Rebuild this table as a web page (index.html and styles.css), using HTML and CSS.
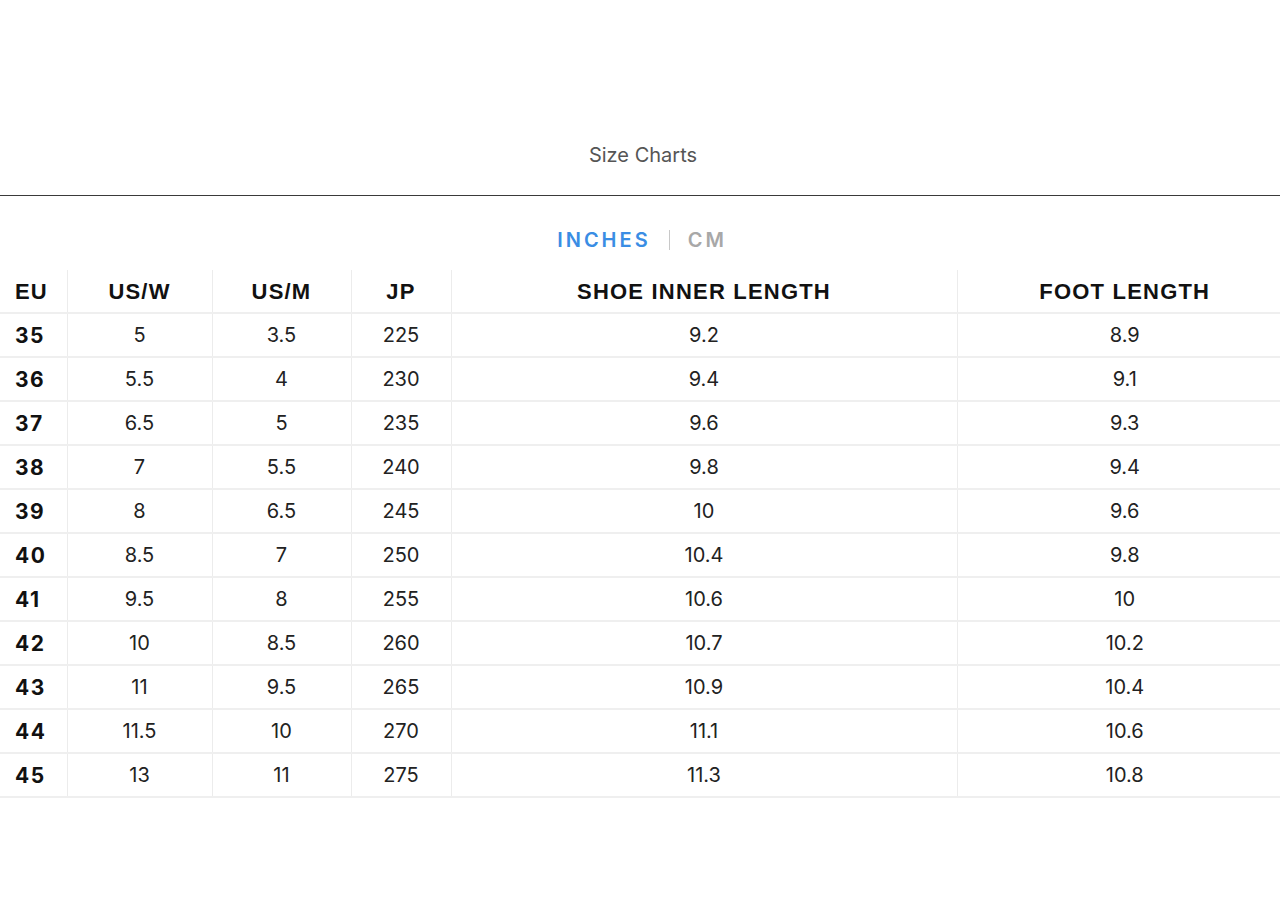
FILE: index.html
```html
<!DOCTYPE html>
<html>
<head>
<meta charset="utf-8">
<link rel="stylesheet" href="styles.css">
</head>
<body>
<div class="page">
  <header class="title-bar">
    <h1 class="title">Size Charts</h1>
  </header>
  <div class="tabs">
    <span class="tab active">INCHES</span>
    <span class="tab-sep"></span>
    <span class="tab">CM</span>
  </div>
  <table class="chart">
    <colgroup>
      <col class="c-eu"><col class="c-usw"><col class="c-usm"><col class="c-jp"><col class="c-shoe"><col class="c-foot">
    </colgroup>
    <thead>
      <tr><th class="eu">EU</th><th>US/W</th><th>US/M</th><th>JP</th><th>SHOE INNER LENGTH</th><th>FOOT LENGTH</th></tr>
    </thead>
    <tbody>
      <tr><td class="eu">35</td><td>5</td><td>3.5</td><td>225</td><td>9.2</td><td>8.9</td></tr>
      <tr><td class="eu">36</td><td>5.5</td><td>4</td><td>230</td><td>9.4</td><td>9.1</td></tr>
      <tr><td class="eu">37</td><td>6.5</td><td>5</td><td>235</td><td>9.6</td><td>9.3</td></tr>
      <tr><td class="eu">38</td><td>7</td><td>5.5</td><td>240</td><td>9.8</td><td>9.4</td></tr>
      <tr><td class="eu">39</td><td>8</td><td>6.5</td><td>245</td><td>10</td><td>9.6</td></tr>
      <tr><td class="eu">40</td><td>8.5</td><td>7</td><td>250</td><td>10.4</td><td>9.8</td></tr>
      <tr><td class="eu">41</td><td>9.5</td><td>8</td><td>255</td><td>10.6</td><td>10</td></tr>
      <tr><td class="eu">42</td><td>10</td><td>8.5</td><td>260</td><td>10.7</td><td>10.2</td></tr>
      <tr><td class="eu">43</td><td>11</td><td>9.5</td><td>265</td><td>10.9</td><td>10.4</td></tr>
      <tr><td class="eu">44</td><td>11.5</td><td>10</td><td>270</td><td>11.1</td><td>10.6</td></tr>
      <tr><td class="eu">45</td><td>13</td><td>11</td><td>275</td><td>11.3</td><td>10.8</td></tr>
    </tbody>
  </table>
</div>
</body>
</html>
```

FILE: styles.css
```css
html, body {
  margin: 0;
  padding: 0;
  background: #fff;
}
body {
  font-family: Inter, "Liberation Sans", sans-serif;
  color: #1a1a1a;
}
.page {
  width: 1280px;
  overflow: hidden;
}
.title-bar {
  height: 196px;
  box-sizing: border-box;
  padding-top: 142px;
  border-bottom: 1.5px solid #3a3a3a;
}
.title {
  margin: 0;
  text-align: center;
  font-size: 20px;
  font-weight: 400;
  line-height: 26px;
  color: #555;
  padding-left: 6px;
}
.tabs {
  height: 74px;
  box-sizing: border-box;
  padding-top: 14px;
  display: flex;
  justify-content: center;
  align-items: center;
  gap: 18px;
  padding-left: 4px;
}
.tab {
  font-size: 20px;
  font-weight: 600;
  letter-spacing: 3px;
  color: #a8a8a8;
}
.tab.active {
  color: #3a8de4;
}
.tab-sep {
  width: 1px;
  height: 20px;
  background: #c8c8c8;
}
.chart {
  width: 1292px;
  border-collapse: collapse;
  table-layout: fixed;
}
.c-eu { width: 67px; }
.c-usw { width: 145px; }
.c-usm { width: 139px; }
.c-jp { width: 100px; }
.c-shoe { width: 506px; }
.c-foot { width: 335px; }
.chart th, .chart td {
  height: 42px;
  padding: 0;
  text-align: center;
  font-size: 20px;
  border-left: 1px solid #ececec;
  border-bottom: 2px solid #efefef;
}
.chart th {
  font-family: "Liberation Sans", Arial, sans-serif;
  font-size: 22px;
  font-weight: 700;
  color: #111;
  letter-spacing: 1.2px;
  padding-top: 2px;
  height: 40px;
}
.chart td {
  font-weight: 400;
  color: #222;
}
.chart .eu {
  border-left: none;
  text-align: left;
  padding-left: 15px;
}
.chart td.eu {
  font-weight: 700;
  color: #111;
  font-size: 21px;
  letter-spacing: 1.5px;
}
```
